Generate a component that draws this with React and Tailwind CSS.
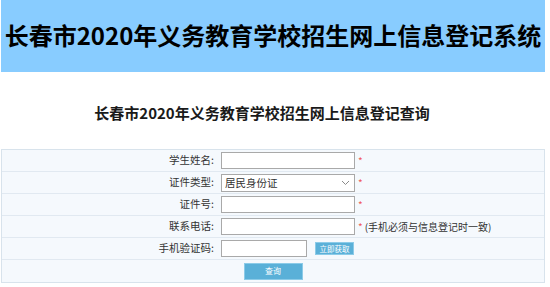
const FIELDS = [
  { label: '学生姓名:', type: 'text', required: true },
  { label: '证件类型:', type: 'select', required: true },
  { label: '证件号:', type: 'text', required: true },
  { label: '联系电话:', type: 'text', required: true, hint: '(手机必须与信息登记时一致)' },
  { label: '手机验证码:', type: 'code' },
];

function Row({ children, last }) {
  return (
    <div className={`flex items-center h-[22px] ${last ? '' : 'border-b border-[#e1e9f1]'}`}>{children}</div>
  );
}

export default function App() {
  return (
    <div className="w-[550px] h-[287px] bg-white overflow-hidden" style={{ fontFamily: '"Noto Sans CJK SC", "Liberation Sans", sans-serif' }}>
      <div className="ml-[1px] w-[544px] h-[72px] bg-[#88ccff] flex items-center justify-center pb-[2px]">
        <h1 className="text-[24px] font-bold text-black leading-none whitespace-nowrap">长春市2020年义务教育学校招生网上信息登记系统</h1>
      </div>

      <div className="h-[77px] flex items-center justify-center pt-[3px] pr-[26px]">
        <h2 className="text-[15px] font-semibold text-[#1a1a1a] leading-none whitespace-nowrap">长春市2020年义务教育学校招生网上信息登记查询</h2>
      </div>

      <div className="ml-[1px] w-[544px] border border-[#d8e3ec] bg-[#f5f9fd] text-[10.5px] text-[#333]">
        {FIELDS.map((f) => (
          <Row key={f.label}>
            <div className="w-[213px] text-right pr-[1px] leading-none">{f.label}</div>
            <div className="ml-[6px] flex items-center">
              {f.type === 'select' ? (
                <div className="w-[134px] h-[18px] border border-[#a9a9a9] bg-white flex items-center justify-between pl-[3px] pr-[4px]">
                  <span className="text-[10.5px] text-[#333]">居民身份证</span>
                  <svg width="9" height="6" viewBox="0 0 9 6" fill="none" stroke="#8a8a8a" strokeWidth="1">
                    <path d="M1 1l3.5 3.5L8 1" />
                  </svg>
                </div>
              ) : f.type === 'code' ? (
                <>
                  <div className="w-[86px] h-[17px] border border-[#a9a9a9] bg-white" />
                  <button type="button" className="ml-[8px] w-[39px] h-[13px] bg-[#5ab0d8] border border-[#8ccbe8] text-white text-[7.5px] leading-none">
                    立即获取
                  </button>
                </>
              ) : (
                <div className="w-[134px] h-[17px] border border-[#a9a9a9] bg-white" />
              )}
              {f.required && <span className="ml-[3px] text-[#f05a5a] text-[10px] leading-none">*</span>}
              {f.hint && <span className="ml-[2px] text-[10px] text-[#333] leading-none">{f.hint}</span>}
            </div>
          </Row>
        ))}
        <Row last>
          <div className="w-full flex justify-center">
            <button type="button" className="w-[59px] h-[17px] bg-[#5ab0d8] border border-[#8ccbe8] text-white text-[8px] leading-none">
              查询
            </button>
          </div>
        </Row>
      </div>
    </div>
  );
}
